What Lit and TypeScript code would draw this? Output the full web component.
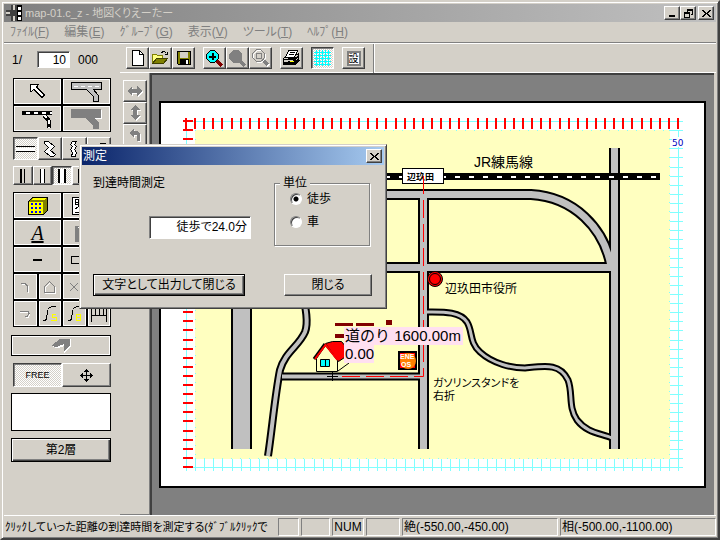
import { LitElement, html, css, svg } from "lit";
import { customElement } from "lit/decorators.js";

const steps = (from: number, to: number, count: number) =>
  Array.from({ length: count + 1 }, (_, i) => Math.round(from + ((to - from) * i) / count));

const icon = (w: number, h: number, body: unknown) =>
  html`<svg class="icon" width=${w} height=${h} viewBox="0 0 ${w} ${h}" aria-hidden="true" shape-rendering="crispEdges">${body}</svg>`;

const icons = {
  app: svg`<path fill="#404040" d="M5 0h6v16H5zM0 5h16v6H0z"/><path fill="#d4d0c8" d="M0 7h4v2H0zM7 0h2v5H7zM7 11h2v5H7z"/><path fill="#000" d="M11 0h5v16h-5z"/><path fill="#fff" d="M12 2h3v3h-3zM12 7h3v3h-3zM12 12h3v3h-3z"/>`,
  blank: svg`<path fill="#fff" stroke="#000" d="M2.500 .5h7l4 4v11h-11z"/><path fill="none" stroke="#000" d="M9.500 .5v4h4"/>`,
  open: svg`<path fill="#ffff80" stroke="#808000" d="M.5 13.500v-9h4l1 1h5v3H5z"/><path fill="#808000" stroke="#404000" d="M.5 13.500l4-5h11l-4 5z"/><path fill="none" stroke="#000" d="M9.500 3.500l1-2h2l2 2M15.500 1.500v3h-3"/>`,
  save: svg`<path fill="#808000" stroke="#000" d="M1.500 1.500h13v13h-12l-1-1z"/><path fill="#d4d0c8" d="M4 2h8v6H4z"/><path fill="#000" d="M4 9h9v5H4z"/><path fill="#fff" d="M10 10h2v4h-2z"/>`,
  zoomIn: svg`<path stroke="#800000" stroke-width="3" d="M11 11l5 5"/><path fill="#0ff" stroke="#000" d="M4.500 .5h4l4 4v4l-4 4h-4l-4-4v-4z"/><path stroke="#000" stroke-width="2" d="M3 7h7M6.500 3v7"/>`,
  zoomGray: svg`<path stroke="#808080" stroke-width="3" d="M11 11l5 5"/><path fill="#808080" d="M4 0h5l4 4v5l-4 4H4L0 9V4z"/>`,
  zoomBox: svg`<path stroke="#fff" stroke-width="3" d="M12 12l5 5"/><path stroke="#808080" stroke-width="3" d="M11 11l5 5"/><path fill="none" stroke="#fff" d="M5.500 1.500h4l4 4v4l-4 4h-4l-4-4v-4z"/><path fill="none" stroke="#808080" d="M4.500 .5h4l4 4v4l-4 4h-4l-4-4v-4zM4.500 4.500h5v5h-5z"/>`,
  print: svg`<path fill="#d4d0c8" stroke="#000" d="M.5 8.500l3-3h9l3-2v7l-4 4H.5z"/><path fill="#fff" stroke="#000" d="M5.500 .5h9l-3 7h-9z"/><path stroke="#000" d="M7 2.500h5M6 4.500h5M0 9.500h12l3-3M0 12.500h12l3-3"/><path stroke="#000" stroke-width="2" d="M1 14h11l4-4"/><path fill="#ff0" d="M7 11h4v1H7z"/>`,
  grid: svg`<path stroke="#0ff" stroke-width="1" d="M2.500 0v16M5.500 0v16M8.500 0v16M11.500 0v16M14.500 0v16M0 2.500h17M0 5.500h17M0 8.500h17M0 11.500h17M0 14.500h17"/>`,
  arrow: svg`<path fill="#fff" stroke="#000" d="M.5 .5h8l-2 2.500 8 8-2.500 2.500-8-8-3 2z"/>`,
  road: svg`<path fill="#c0c0c0" stroke="#000" d="M.5 1.500h30v7h-8l5 6v6h-5v-5l-7-7h-15z"/><path stroke="#fff" stroke-dasharray="4 3" d="M3 5.500h26"/>`,
  rail: svg`<path stroke="#000" stroke-width="4" d="M0 3h30"/><path stroke="#fff" stroke-width="2" stroke-dasharray="4 4" d="M4 3h26"/><path fill="none" stroke="#000" stroke-width="4" d="M22 5l5 6v7"/><path fill="none" stroke="#fff" stroke-width="2" stroke-dasharray="4 3" d="M22 5l5 6v7"/>`,
  roadGray: svg`<path fill="#808080" d="M0 1h30v9h-7l5 5v6h-6v-4l-8-7H0z"/><path fill="none" stroke="#fff" d="M30.500 2v8.500h-7"/>`,
  lines: svg`<path stroke="#000" d="M0 5.500h19M0 10.500h19"/><path stroke="#fff" stroke-width="3" d="M0 8h19"/>`,
  zig: svg`<path fill="#fff" stroke="#000" d="M.5 .5h4l6 5-4 4 5 4-2 2h-3l-6-5 4-4-4-4z"/>`,
  wave: svg`<path fill="#fff" stroke="#000" d="M2.500 .5h4l-2 3 2 2-2 3 2 3-1 4h-4l1-4-2-3 2-3-2-2z"/>`,
  curve: svg`<path fill="none" stroke="#000" d="M1.500 15c0-8 3-13 12-13M5.500 15c0-5 2-8 8-8"/>`,
  bar1: svg`<path stroke="#000" stroke-width="2" d="M3 0v14"/><path stroke="#000" d="M6.500 0v14"/>`,
  bar2: svg`<path fill="#fff" stroke="#000" d="M2.500 -1h4v16h-4z"/>`,
  bar3: svg`<path fill="#fff" stroke="#000" stroke-width="2" d="M2 -1h6v16H2z"/>`,
  building: svg`<path fill="#808000" stroke="#000" d="M.5 4.500l4-4h15v13l-4 4H.5z"/><path fill="#ff0" d="M1 5h14v12H1zM3 3l2-2h13l-2 2z"/><path fill="#00f" d="M3 6h2v2H3zM7 6h2v2H7zM11 6h2v2h-2zM3 10h2v2H3zM7 10h2v2H7zM11 10h2v2h-2zM3 14h2v2H3zM7 14h2v2H7zM11 14h2v2h-2z"/>`,
  station: svg`<path fill="#fff" stroke="#000" d="M.5 .5h18v17H.5z"/><path fill="none" stroke="#000" d="M3 2.500h6v5H3zM3 5.500h6M6.500 2v8M3 12l3-2M3 15.500h12M10 4h6M10 8h6"/>`,
  up: svg`<path fill="#808080" d="M0 2h16v16H0z"/><path fill="#fff" d="M3 4l3-4 3 4v8H5V4z"/>`,
  dash: svg`<path fill="#000" d="M0 7h9v2H0z"/>`,
  box: svg`<path fill="none" stroke="#000" d="M.5 4.500h18v7H.5z"/>`,
  hook: svg`<path fill="none" stroke="#fff" d="M1 4.500h4l2 2v6"/><path fill="none" stroke="#808080" d="M0 3.500h4l2 2v6"/>`,
  home: svg`<path fill="none" stroke="#fff" d="M1.500 13.500v-6l5-5 5 5v6z"/><path fill="none" stroke="#808080" d="M.5 12.500v-6l5-5 5 5v6z"/>`,
  cross: svg`<path fill="none" stroke="#808080" d="M1 3l8 8M9 3l-8 8"/>`,
  hook2: svg`<path fill="none" stroke="#fff" d="M0 5.500h8l2 2-2 3H6"/><path fill="none" stroke="#808080" d="M0 4.500h8l1 2-2 3H5"/>`,
  curveS: svg`<path fill="none" stroke="#000" d="M.5 16c5 0 4-4 5-9 0-4 2-5.500 8-5.500"/><path fill="none" stroke="#ff0" d="M14 9.500h-4v3h4v3h-5"/>`,
  curveB: svg`<path fill="none" stroke="#000" d="M.5 16c5 0 4-4 5-9 0-4 2-5.500 8-5.500"/><path fill="none" stroke="#ff0" d="M9.500 9.500h4v6h-4zM9 12.500h4"/>`,
  fence: svg`<path fill="none" stroke="#000" d="M.5 16V2M15.500 16V2M0 2.500h16M0 9.500h16M4.500 3v6M8.500 3v6M12.500 3v6"/>`,
  eraser: svg`<path fill="#fff" d="M1 9l11-8h8v8l-7 6V8l-6 2z"/><path fill="#808080" d="M0 8l9-7h10v7l-6 5V6L6 9z"/>`,
  move: svg`<path fill="none" stroke="#000" d="M6.500 0v13M0 6.500h13M5 1.500h3M4 2.500h5M5 11.500h3M4 10.500h5M1.500 5v3M2.500 4v5M11.500 5v3M10.500 4v5"/>`,
  flipH: svg`<path fill="#fff" d="M1 7l5-5v3h5V2l5 5-5 5V9H6v3z"/><path fill="#808080" d="M0 6l5-5v3h5V1l5 5-5 5V8H5v3z"/>`,
  flipV: svg`<path fill="#fff" d="M7 1l5 5H9v5h3l-5 5-5-5h3V6H2z"/><path fill="#808080" d="M6 0l5 5H8v5h3l-5 5-5-5h3V5H1z"/>`,
  turn: svg`<path fill="#fff" d="M1 6l5-5v3h3l3 3v7H9V8H6v3z"/><path fill="#808080" d="M0 5l5-5v3h3l3 3v7H8V7H5v3z"/>`,
  min: svg`<path fill="#000" d="M1 7h6v2H1z"/>`,
  restore: svg`<path fill="none" stroke="#000" d="M3.500 2.500v-2h5v5h-2M.5 3.500h5v5h-5zM3 1.500h6M0 4.500h6"/>`,
  close: svg`<path fill="#000" d="M0 1h2v1h1v1h1v1h1V3h1V2h1V1h2v1H8v1H7v1H6v1h1v1h1v1h1v1H7V7H6V6H5V5H4v1H3v1H2v1H0V7h1V6h1V5h1V4H2V3H1V2H0z"/>`,
};

@customElement("route-map")
class RouteMap extends LitElement {
  static styles = css`
    :host { display: block; }
    .map { display: block; width: 100%; height: auto; font-family: "Liberation Sans", "Noto Sans CJK JP", sans-serif; font-feature-settings: "palt"; }
    .edge { fill: none; stroke: #000; }
    .fill { fill: none; stroke: #c0c0c0; }
    .cyan { fill: none; stroke: #80ffff; }
    .red { fill: none; stroke: #f00; stroke-width: 2; }
    .route { fill: none; stroke: #f00; stroke-width: 1; stroke-dasharray: 18 6; }
    .place { font-size: 12px; }
    .note { font-size: 11px; }
    .railname { font-size: 14px; }
    .station { font-size: 9px; font-weight: 700; }
    .coord { font-size: 9px; fill: #0000c0; font-family: "DejaVu Sans", sans-serif; }
    .distance { font-size: 15px; font-feature-settings: normal; }
    .brand { font-size: 7px; font-weight: 700; fill: #fff; }
  `;

  roads = [
    { d: "M241.500 150V449", w: 21, i: 17 },
    { d: "M614.500 148V449", w: 11, i: 7 },
    { d: "M423.500 195V449", w: 11, i: 7 },
    { d: "M252 267.500H614", w: 11, i: 7 },
    { d: "M252 194.500H531C574 197 604 228 611 266", w: 11, i: 7 },
    { d: "M282 376.500H422", w: 8, i: 4 },
    { d: "M302 290C305 305 309 322 305 332C299 346 285 352 280 370C275 395 272 430 268 456", w: 8, i: 4 },
    { d: "M427 312C442 312 460 311 467 322C473 332 469 342 480 352C493 364 512 368 525 368C545 366 560 363 568 380C573 393 568 407 577 420C587 433 600 433 612 438", w: 7, i: 3 },
  ];

  render() {
    const xs = steps(186, 678, 54);
    const ys = steps(121, 467, 38);
    return html`<svg class="map" viewBox="161 103 543 383" role="img" aria-label="地図">
      <g shape-rendering="crispEdges">
        <rect x="195" y="130" width="475" height="329" fill="#ffffc0" />
        <path class="cyan" d="M186 121.500H683M186.500 121V471M678.500 130V471M186 467.500H683" />
        <path class="cyan" d=${xs.slice(1).map((x) => `M${x}.5 459V471`).join("") + ys.slice(1).map((y) => `M670 ${y}.5H683`).join("")} />
        <path class="cyan" stroke-dasharray="1 8" d="M195 130.500H670M195 458.500H670M195.500 130V459M669.500 130V459" />
        <path class="red" d=${xs.map((x) => `M${x} 118V129`).join("") + ys.map((y) => `M183 ${y}H193`).join("")} />
      </g>
      ${this.roads.map((r) => svg`<path class="edge" stroke-width=${r.w} d=${r.d} />`)}
      ${this.roads.map((r) => svg`<path class="fill" stroke-width=${r.i} d=${r.d} />`)}
      <g shape-rendering="crispEdges">
        <path stroke="#000" stroke-width="7" d="M380 176.500H660" />
        <path stroke="#fff" stroke-width="2" stroke-dasharray="5 9" d="M385 177H657" />
        <rect x="402.500" y="168.500" width="41" height="15" fill="#fff" stroke="#000" />
      </g>
      <text class="station" x="407" y="180">辺玖田</text>
      <path class="route" d="M423.500 176V376.500H334" />
      <text class="railname" x="474" y="167">JR練馬線</text>
      <circle cx="435" cy="279" r="7.500" fill="#f00" stroke="#000" />
      <circle cx="435" cy="279" r="5.500" fill="#f00" stroke="#000" />
      <text class="place" x="445" y="293">辺玖田市役所</text>
      <text class="note" x="433" y="387">ガソリンスタンドを</text>
      <text class="note" x="433" y="400">右折</text>
      <rect x="672" y="137" width="12" height="10" fill="#fff" />
      <text class="coord" x="672" y="146">50</text>
      <path fill="#800000" d="M335 323h18v3h-18zM356 323h18v3h-18zM386 320h6v5h-6zM335 334h10v4h-10z" />
      <path fill="#f00" stroke="#000" d="M325.500 343.500l7-2 9 0 5 6-2 10-6 4z" />
      <path fill="#ffffc0" stroke="#000" d="M316.500 371.500v-13l9-13 12 15v11z" />
      <path fill="none" stroke="#000" stroke-width="3" d="M314 359l11-15" />
      <path fill="none" stroke="#f00" stroke-width="2" d="M315 359l10.500-14 12 15" />
      <path fill="#0ff" stroke="#000" d="M320.500 359.500h9v7h-9zM325.500 359v7" />
      <path fill="none" stroke="#000" d="M338 371l11-8M332.500 371v10M327 376.500h11" />
      <rect x="344" y="327" width="119" height="18" fill="#ffe0f0" />
      <rect x="344" y="345" width="30" height="18" fill="#ffe0f0" />
      <text class="distance" x="345" y="341">道のり 1600.00m</text>
      <text class="distance" x="345" y="359">0.00</text>
      <rect x="399" y="352" width="17" height="17" fill="#f00" stroke="#000" stroke-width="2" />
      <circle cx="408" cy="361" r="8" fill="#ff8000" />
      <text class="brand" x="400" y="359">ENE</text>
      <text class="brand" x="401" y="367">OS</text>
    </svg>`;
  }
}

@customElement("app-root")
class AppRoot extends LitElement {
  static styles = css`
    :host { display: block; color: #000; font: 12px/14px "Liberation Sans", "Noto Sans CJK JP", sans-serif; font-feature-settings: "palt"; cursor: default; }
    * { box-sizing: border-box; }
    button, input { font: inherit; font-feature-settings: inherit; color: inherit; margin: 0; padding: 0; border-radius: 0; }
    .window { position: relative; display: flex; flex-direction: column; min-height: 100vh; padding: 2px; background: #d4d0c8; border: 2px solid; border-color: #d4d0c8 #404040 #404040 #d4d0c8; box-shadow: inset 1px 1px #fff, inset -1px -1px #808080; overflow: hidden; white-space: nowrap; }
    .titlebar { display: flex; align-items: center; height: 18px; padding: 0 2px; gap: 3px; color: #d4d0c8; background: linear-gradient(90deg, #808080, #c0c0c0); }
    .title { flex: 1; margin: 0; font: inherit; font-size: 11px; }
    .caption { display: flex; }
    .icon { display: block; flex: none; overflow: hidden; }
    .btn { display: flex; align-items: center; justify-content: center; background: #d4d0c8; border: 1px solid; border-color: #fff #404040 #404040 #fff; box-shadow: inset -1px -1px #808080; }
    .cap { width: 16px; height: 14px; }
    .cap:last-child { margin-left: 2px; }
    .menu { display: flex; align-items: center; gap: 15px; height: 21px; padding: 0 6px; color: #808080; border-bottom: 1px solid #808080; }
    .menu button { background: none; border: 0; }
    .key { text-decoration: underline; }
    .main { flex: 1; display: flex; border-top: 1px solid #fff; }
    .side { flex: none; width: 116px; padding: 7px 9px 0; }
    .scale { display: flex; align-items: center; gap: 8px; height: 17px; margin: 0 0 10px -1px; }
    .scale input { width: 33px; height: 17px; padding-right: 3px; text-align: right; }
    .field { background: #fff; border: 1px solid; border-color: #808080 #fff #fff #808080; box-shadow: inset 1px 1px #404040; outline: none; }
    .scale .lead { width: 17px; }
    .palette { display: grid; grid-template-columns: repeat(4, minmax(0, 1fr)); grid-auto-rows: 25px; gap: 2px; padding: 1px; background: #000; }
    .cell { display: flex; align-items: center; justify-content: center; background: #d4d0c8; border: 1px solid #fff; }
    .wide { grid-column: span 2; }
    .letter { font: italic 20px/22px "Liberation Serif", serif; text-decoration: underline; }
    .row { display: grid; grid-auto-flow: column; grid-auto-columns: minmax(0, 1fr); }
    .shapes { height: 23px; margin: 5px 0 6px; }
    .bars { height: 19px; margin-bottom: 7px; }
    .mode { height: 24px; margin: 7px 0 6px; }
    .down { background: repeating-conic-gradient(#fff 0 25%, #d4d0c8 0 50%) 0 0 / 2px 2px; border-color: #404040 #fff #fff #404040; box-shadow: inset 1px 1px #808080; }
    .flat { width: 100px; height: 21px; margin: 8px 0 0 -2px; border: 1px solid #000; background: #d4d0c8; box-shadow: inset 0 0 0 1px #fff; display: flex; align-items: center; justify-content: center; }
    .preview { width: 100px; height: 38px; margin: 0 0 7px -2px; border: 1px solid #000; background: #fff; }
    .layer { width: 100px; height: 24px; margin-left: -2px; }
    .default { border-color: #000; box-shadow: inset 1px 1px #fff, inset -1px -1px #404040, inset -2px -2px #808080; }
    .mono { font-size: 9px; }
    .right { flex: 1; min-width: 0; display: flex; flex-direction: column; }
    .tools { display: flex; align-items: center; gap: 8px; height: 29px; padding: 0 6px; border-bottom: 1px solid #fff; }
    .group { display: flex; }
    .tool { width: 23px; height: 22px; }
    .divider { width: 2px; height: 29px; background: linear-gradient(90deg, #808080 50%, #fff 50%); }
    .small { font-size: 10px; line-height: 11px; border: 2px solid #808080; background: #fff; }
    .area { flex: 1; display: flex; }
    .strip { flex: none; width: 30px; padding: 7px 3px; border-right: 1px solid #808080; border-bottom: 1px solid #808080; }
    .strip .btn { width: 24px; height: 22px; }
    .desk { flex: 1; min-width: 0; padding: 26px 8px 24px 7px; background: #808080; border: solid #404040; border-width: 2px 0 0 2px; margin-right: 2px; }
    .paper { background: #fff; border: 2px solid #000; }
    .status { display: flex; gap: 2px; padding-top: 2px; border-top: 1px solid #fff; }
    .pane { flex: none; height: 18px; line-height: 16px; padding: 0 1px; border: 1px solid; border-color: #808080 #fff #fff #808080; overflow: hidden; }
    .hint { width: 272px; padding: 0; font-size: 11px; border-color: transparent; }
    .p1 { width: 21px; } .p2 { width: 29px; } .p3 { width: 32px; text-align: center; } .p4 { width: 34px; }
    .pos { flex: 1; }
    .dialog { position: absolute; left: 77px; top: 142px; width: 308px; height: 165px; padding: 1px; background: #d4d0c8; border: 1px solid; border-color: #d4d0c8 #404040 #404040 #d4d0c8; box-shadow: inset 1px 1px #fff, inset -1px -1px #808080; }
    .dtitle { display: flex; align-items: center; justify-content: space-between; height: 18px; margin: 1px; padding: 0 2px 0 1px; color: #fff; background: linear-gradient(90deg, #0a246a, #a6caf0); }
    .dtitle h2 { margin: 0; font: inherit; }
    .dbody { display: flex; justify-content: space-between; height: 108px; padding: 10px 15px 0 12px; }
    .measure { display: flex; flex-direction: column; gap: 26px; }
    .measure input { width: 102px; height: 23px; margin-left: 56px; padding: 0 3px 4px; text-align: right; }
    .unit { width: 96px; min-width: 0; margin: 0; padding: 0; border: 0; }
    .unitbox { height: 63px; margin-top: -7px; padding: 7px 15px; border: 1px solid #808080; box-shadow: 1px 1px #fff, inset 1px 1px #fff; }
    .unit legend { position: relative; margin-left: 6px; padding: 0 3px; background: #d4d0c8; }
    .radio { display: flex; align-items: center; gap: 5px; height: 23px; margin-top: -4px; }
    .radio + .radio { margin-top: 0; }
    .radio input { appearance: none; width: 12px; height: 12px; border: 1px solid; border-color: #808080 #fff #fff #808080; border-radius: 50%; background: #fff; box-shadow: inset 1px 1px #404040; }
    .radio input:checked { background: radial-gradient(#000 0 2px, #fff 3px); }
    .dfoot { display: flex; justify-content: space-between; padding: 0 13px 0 12px; }
    .dfoot .btn { height: 22px; width: 88px; }
    .dfoot .default { width: 152px; }
  `;

  key(label: string, key: string) {
    return html`<button type="button">${label}(<span class="key">${key}</span>)</button>`;
  }
  btn(cls: string, label: string, body: unknown) {
    return html`<button type="button" class=${cls} aria-label=${label}>${body}</button>`;
  }

  render() {
    const b = this.btn;
    return html`<div class="window">
      <header class="titlebar">
        ${icon(16, 16, icons.app)}
        <h1 class="title">map-01.c_z - 地図くりえーたー</h1>
        <div class="caption">
          ${b("btn cap", "最小化", icon(9, 10, icons.min))}
          ${b("btn cap", "元に戻す", icon(9, 9, icons.restore))}
          ${b("btn cap", "閉じる", icon(9, 9, icons.close))}
        </div>
      </header>
      <nav class="menu">
        ${this.key("ﾌｧｲﾙ", "F")}${this.key("編集", "E")}${this.key("ｸﾞﾙｰﾌﾟ", "G")}${this.key("表示", "V")}${this.key("ツール", "T")}${this.key("ﾍﾙﾌﾟ", "H")}
      </nav>
      <div class="main">
        <aside class="side">
          <div class="scale"><label class="lead" for="scale">1/</label><input class="field" id="scale" value="10" /><span>000</span></div>
          <div class="palette">
            ${b("cell wide", "選択", icon(16, 16, icons.arrow))}
            ${b("cell wide", "道路", icon(31, 21, icons.road))}
            ${b("cell wide", "線路", icon(31, 18, icons.rail))}
            ${b("cell wide", "道路面", icon(31, 21, icons.roadGray))}
          </div>
          <div class="row shapes">
            ${b("btn down", "直線", icon(19, 16, icons.lines))}
            ${b("btn", "折れ線", icon(12, 16, icons.zig))}
            ${b("btn", "波線", icon(8, 16, icons.wave))}
            ${b("btn", "曲線", icon(14, 16, icons.curve))}
          </div>
          <div class="row bars">
            ${b("btn", "幅1", icon(9, 14, icons.bar1))}
            ${b("btn", "幅2", icon(9, 14, icons.bar2))}
            ${b("btn down", "幅3", icon(10, 14, icons.bar3))}
            ${b("btn", "幅4", icon(10, 14, icons.bar3))}
            ${b("btn", "幅5", icon(10, 14, icons.bar3))}
          </div>
          <div class="palette">
            ${b("cell wide", "建物", icon(20, 18, icons.building))}
            ${b("cell wide", "駅", icon(30, 18, icons.station))}
            ${b("cell wide", "文字", html`<span class="letter">A</span>`)}
            ${b("cell wide", "矢印", icon(24, 18, icons.up))}
            ${b("cell wide", "線", icon(9, 16, icons.dash))}
            ${b("cell wide", "四角", icon(31, 16, icons.box))}
            ${b("cell", "角", icon(8, 14, icons.hook))}
            ${b("cell", "家", icon(12, 14, icons.home))}
            ${b("cell", "交差", icon(10, 14, icons.cross))}
            ${b("cell", "削除", icon(10, 14, icons.cross))}
            ${b("cell", "終端", icon(10, 14, icons.hook2))}
            ${b("cell", "スプライン", icon(15, 17, icons.curveS))}
            ${b("cell", "ベジェ", icon(15, 17, icons.curveB))}
            ${b("cell", "柵", icon(16, 16, icons.fence))}
          </div>
          ${b("flat", "立体", icon(20, 15, icons.eraser))}
          <div class="row mode">
            <button type="button" class="btn down mono">FREE</button>
            ${b("btn", "移動", icon(13, 13, icons.move))}
          </div>
          <div class="preview"></div>
          <button type="button" class="btn default layer">第2層</button>
        </aside>
        <div class="right">
          <div class="tools">
            <div class="group">
              ${b("btn tool", "新規", icon(16, 16, icons.blank))}
              ${b("btn tool", "開く", icon(17, 16, icons.open))}
              ${b("btn tool", "保存", icon(16, 16, icons.save))}
            </div>
            <div class="group">
              ${b("btn tool", "拡大", icon(17, 17, icons.zoomIn))}
              ${b("btn tool", "縮小", icon(17, 17, icons.zoomGray))}
              ${b("btn tool", "範囲", icon(18, 18, icons.zoomBox))}
            </div>
            ${b("btn tool", "印刷", icon(17, 16, icons.print))}
            ${b("btn tool down", "グリッド", icon(17, 16, icons.grid))}
            <button type="button" class="btn tool"><span class="small">設</span></button>
            <span class="divider"></span>
          </div>
          <div class="area">
            <div class="strip">
              ${b("btn", "左右反転", icon(16, 13, icons.flipH))}
              ${b("btn", "上下反転", icon(13, 16, icons.flipV))}
              ${b("btn", "回転", icon(12, 14, icons.turn))}
            </div>
            <main class="desk"><div class="paper"><route-map></route-map></div></main>
          </div>
        </div>
      </div>
      <footer class="status">
        <span class="pane hint">ｸﾘｯｸしていった距離の到達時間を測定する(ﾀﾞﾌﾞﾙｸﾘｯｸで</span>
        <span class="pane p1"></span><span class="pane p2"></span><span class="pane p3">NUM</span><span class="pane p4"></span>
        <span class="pane pos">絶(-550.00,-450.00)</span><span class="pane pos">相(-500.00,-1100.00)</span>
      </footer>
      <section class="dialog" role="dialog" aria-labelledby="dlg">
        <div class="dtitle"><h2 id="dlg">測定</h2>${b("btn cap", "閉じる", icon(9, 9, icons.close))}</div>
        <div class="dbody">
          <div class="measure">
            <label for="time">到達時間測定</label>
            <input class="field" id="time" value="徒歩で24.0分" />
          </div>
          <fieldset class="unit">
            <legend>単位</legend>
            <div class="unitbox">
              <label class="radio"><input type="radio" name="unit" checked />徒歩</label>
              <label class="radio"><input type="radio" name="unit" />車</label>
            </div>
          </fieldset>
        </div>
        <div class="dfoot">
          <button type="button" class="btn default">文字として出力して閉じる</button>
          <button type="button" class="btn">閉じる</button>
        </div>
      </section>
    </div>`;
  }
}
